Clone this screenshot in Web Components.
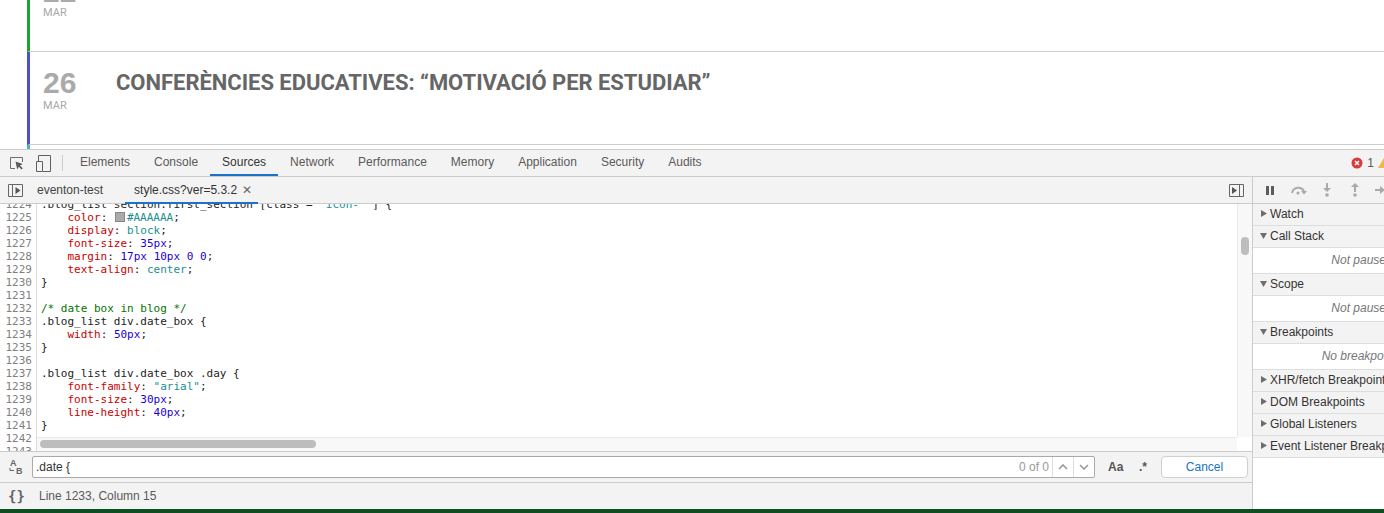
<!DOCTYPE html>
<html>
<head>
<meta charset="utf-8">
<title>DevTools</title>
<style>
html, body { margin: 0; padding: 0; height: 513px; overflow: hidden; background: #fff; }
body { display: flex; flex-direction: column; font-family: "Liberation Sans", Arial, sans-serif; }
</style>
</head>
<body>
<page-top></page-top>
<dev-tools></dev-tools>

<script>
class PageTop extends HTMLElement {
  constructor() {
    super();
    this.shadowDOM = this.attachShadow({ mode: "open" });
  }
  connectedCallback() {
    this.shadowDOM.innerHTML = `
      <style>
        :host { display: block; height: 149px; padding-left: 27px; overflow: hidden; background: #fff; box-sizing: border-box; }
        .row { display: flex; border-bottom: 1px solid #ccc; border-left: 3px solid #1fa12f; box-sizing: border-box; font-family: Roboto, sans-serif; }
        .first { height: 52px; align-items: flex-end; }
        .second { height: 93px; border-left-color: #5151bd; }
        .third { height: 4px; border-left-color: #49afcd; border-bottom: 0; }
        .date { width: 86px; padding-left: 13px; box-sizing: border-box; color: #aaa; flex: none; }
        .first .date { padding-bottom: 32px; }
        .first .day { margin-bottom: -2px; }
        .second .date { padding-top: 15px; }
        .day { font-family: "Liberation Sans", sans-serif; font-weight: bold; font-size: 30px; line-height: 31px; }
        .mon { font-size: 11px; line-height: 13px; margin-top: 1px; color: #a8a8a8; }
        h2 { margin: 18px 0 0; font-size: 22px; line-height: 26px; font-weight: 700; color: #666; letter-spacing: -0.03px; }
      </style>
      <div class="row first"><div class="date"><div class="day">22</div><div class="mon">MAR</div></div></div>
      <div class="row second">
        <div class="date"><div class="day">26</div><div class="mon">MAR</div></div>
        <h2>CONFERÈNCIES EDUCATIVES: “MOTIVACIÓ PER ESTUDIAR”</h2>
      </div>
      <div class="row third"></div>
    `;
  }
}
customElements.define("page-top", PageTop);

class DtTabs extends HTMLElement {
  constructor() {
    super();
    this.shadowDOM = this.attachShadow({ mode: "open" });
  }
  connectedCallback() {
    const items = ["Elements", "Console", "Sources", "Network", "Performance", "Memory", "Application", "Security", "Audits"];
    this.shadowDOM.innerHTML = `
      <style>
        :host { display: flex; align-items: stretch; height: 28px; box-sizing: border-box; background: #f3f3f3; border-top: 1px solid #ccc; border-bottom: 1px solid #ccc; font-size: 12px; color: #5a5a5a; overflow: hidden; position: relative; }
        .tools { display: flex; align-items: center; gap: 12px; padding-left: 10px; width: 62px; flex: none; box-sizing: border-box; }
        .sep { width: 1px; height: 16px; background: #ccc; flex: none; align-self: center; margin: 0 5px 0 0; }
        .tab { padding: 0 12px; line-height: 25px; flex: none; }
        .tab.on { color: #333; box-shadow: inset 0 -2px 0 #1a73c9; }
        .errs { position: absolute; right: 0; top: 0; height: 25px; display: flex; align-items: center; gap: 4px; }
        svg { display: block; flex: none; }
      </style>
      <div class="tools">
        <svg width="14" height="13" viewBox="0 0 14 13"><path d="M5 11.500H.5V.5h12V5" fill="none" stroke="#6e6e6e"/><path d="M5.500 4.500l1.700 8 1.600-2.700 2.700 2.700 1.200-1.200-2.700-2.700 2.700-1.600z" fill="#5a5a5a"/></svg>
        <svg width="15" height="17" viewBox="0 0 15 17"><path d="M2.500 6V.5h12v16H7" fill="none" stroke="#5f5f5f"/><path d="M.5 6.500h6v10h-6z" fill="none" stroke="#5f5f5f"/></svg>
      </div>
      <div class="sep"></div>
      ${items.map(t => `<div class="tab${t === "Sources" ? " on" : ""}">${t}</div>`).join("")}
      <div class="errs">
        <svg width="12" height="12" viewBox="0 0 12 12"><circle cx="6" cy="6" r="5.500" fill="#d93a3a"/><path d="M4 4l4 4M8 4l-4 4" stroke="#fff" stroke-width="1.500"/></svg>
        <span>1</span>
        <svg width="6" height="12" viewBox="0 0 6 12"><path d="M6 1L0 11h6z" fill="#f3b63f"/></svg>
      </div>
    `;
  }
}
customElements.define("dt-tabs", DtTabs);

class DtEditor extends HTMLElement {
  constructor() {
    super();
    this.shadowDOM = this.attachShadow({ mode: "open" });
  }
  connectedCallback() {
    const p = (n, v) => `    <i class="p">${n}</i>: ${v};`;
    const lines = [
      [1224, `.blog_list section.first_section [class = <i class="s">"icon-"</i> ] {`],
      [1225, `    <i class="p">color</i>: <b class="sw"></b><i class="s">#AAAAAA</i>;`],
      [1226, p("display", `<i class="s">block</i>`)],
      [1227, p("font-size", `<i class="n">35px</i>`)],
      [1228, p("margin", `<i class="n">17px</i> <i class="n">10px</i> <i class="n">0</i> <i class="n">0</i>`)],
      [1229, p("text-align", `<i class="s">center</i>`)],
      [1230, `}`],
      [1231, ``],
      [1232, `<i class="c">/* date box in blog */</i>`],
      [1233, `.blog_list div.date_box {`],
      [1234, p("width", `<i class="n">50px</i>`)],
      [1235, `}`],
      [1236, ``],
      [1237, `.blog_list div.date_box .day {`],
      [1238, p("font-family", `<i class="s">"arial"</i>`)],
      [1239, p("font-size", `<i class="n">30px</i>`)],
      [1240, p("line-height", `<i class="n">40px</i>`)],
      [1241, `}`],
      [1242, ``],
      [1243, ``]
    ];
    this.shadowDOM.innerHTML = `
      <style>
        :host { display: block; flex: 1; min-height: 0; background: #fff; position: relative; overflow: hidden; }
        .code { margin-top: -6px; font: 11px/13px "DejaVu Sans Mono", monospace; color: #222; }
        .ln { display: flex; height: 13px; white-space: pre; }
        .no { width: 32px; padding-right: 4px; text-align: right; color: #808080; border-right: 1px solid #ddd; flex: none; margin-right: 4px; }
        i { font-style: normal; }
        .p { color: #c80000; }
        .s { color: #1a8f8f; }
        .n { color: #1c00cf; }
        .c { color: #007400; }
        .sw { display: inline-block; width: 10px; height: 10px; background: #aaa; border: 1px solid #888; box-sizing: border-box; margin: 0 2px 0 1px; vertical-align: -1px; }
        .hbar { position: absolute; left: 37px; right: 15px; top: 233px; height: 14px; background: #f8f8f8; border-top: 1px solid #e8e8e8; box-sizing: border-box; }
        .hthumb { position: absolute; left: 3px; top: 2px; width: 276px; height: 8px; border-radius: 4px; background: #bdbdbd; }
        .vbar { position: absolute; right: 0; top: 0; width: 15px; height: 233px; background: #f8f8f8; border-left: 1px solid #e8e8e8; box-sizing: border-box; }
        .vthumb { position: absolute; left: 3px; top: 33px; width: 8px; height: 18px; border-radius: 4px; background: #bdbdbd; }
      </style>
      <div class="code">${lines.map(l => `<div class="ln"><span class="no">${l[0]}</span><span>${l[1]}</span></div>`).join("")}</div>
      <div class="hbar"><div class="hthumb"></div></div>
      <div class="vbar"><div class="vthumb"></div></div>
    `;
  }
}
customElements.define("dt-editor", DtEditor);

class DtSources extends HTMLElement {
  constructor() {
    super();
    this.shadowDOM = this.attachShadow({ mode: "open" });
  }
  connectedCallback() {
    this.shadowDOM.innerHTML = `
      <style>
        :host { display: flex; flex-direction: column; flex: 1; min-width: 0; font-size: 12px; color: #333; }
        .tabs { height: 27px; flex: none; display: flex; align-items: center; background: #f3f3f3; border-bottom: 1px solid #ccc; box-sizing: border-box; position: relative; }
        .tabs svg { display: block; flex: none; }
        .t { flex: none; }
        .open { position: absolute; left: 125px; bottom: -1px; width: 133px; height: 2px; background: #1a73c9; z-index: 1; display: block; }
        .x { color: #666; margin-left: 5px; font-size: 12px; }
        .search { height: 31px; flex: none; background: #f3f3f3; border-top: 1px solid #ccc; display: flex; align-items: center; box-sizing: border-box; }
        .case { width: 32px; flex: none; display: flex; justify-content: center; }
        .inp { width: 1063px; height: 22px; box-sizing: border-box; flex: none; background: #fff; border: 1px solid #aaa; border-radius: 2px; display: flex; align-items: center; padding-left: 3px; color: #333; font-size: 12px; }
        .q { flex: 1; }
        .cnt { color: #999; font-size: 12px; padding-right: 3px; }
        .arr { width: 20px; height: 20px; border-left: 1px solid #ddd; display: flex; align-items: center; justify-content: center; }
        .aa { margin-left: 13px; font-weight: bold; font-size: 12px; color: #555; width: 16px; }
        .re { margin-left: 15px; font-weight: bold; color: #555; font-size: 12px; width: 15px; }
        .cancel { margin-left: 7px; width: 87px; height: 22px; box-sizing: border-box; border: 1px solid #d0d0d0; border-radius: 4px; background: #fff; color: #1a73c9; display: flex; align-items: center; justify-content: center; }
        .status { height: 27px; flex: none; background: #f3f3f3; border-top: 1px solid #ccc; display: flex; align-items: center; box-sizing: border-box; color: #5a5a5a; }
        .curly { width: 39px; flex: none; text-align: center; padding-right: 6px; box-sizing: border-box; font: bold 14px "DejaVu Sans Mono", monospace; color: #666; }
      </style>
      <div class="tabs">
        <svg style="margin-left:8px" width="15" height="15" viewBox="0 0 15 15"><path d="M.5 1.500h14v12H.5zM4.500 1.500v12" fill="none" stroke="#666"/><path d="M7.500 4l5 3.500-5 3.500z" fill="#555"/></svg>
        <span class="t" style="margin-left:14px;color:#444">eventon-test</span>
        <span class="t" style="margin-left:31px">style.css?ver=5.3.2</span><span class="x">✕</span>
        <span class="open"></span>
        <svg style="position:absolute;right:8px;top:6px" width="15" height="15" viewBox="0 0 15 15"><path d="M.5 1.500h14v12H.5zM10.500 1.500v12" fill="none" stroke="#666"/><path d="M3 4l5 3.500-5 3.500z" fill="#555"/></svg>
      </div>
      <dt-editor></dt-editor>
      <div class="search">
        <div class="case"><svg width="18" height="18" viewBox="0 0 18 18"><text x="3" y="8" font-size="9" font-weight="bold" font-family="Liberation Sans" fill="#666">A</text><text x="9" y="16" font-size="9" font-weight="bold" font-family="Liberation Sans" fill="#666">B</text><path d="M3 10v2.500h4" fill="none" stroke="#666"/></svg></div>
        <div class="inp"><span class="q">.date {</span><span class="cnt">0 of 0</span>
          <span class="arr"><svg width="10" height="6" viewBox="0 0 10 6"><path d="M1 5l4-4 4 4" fill="none" stroke="#999" stroke-width="1.600"/></svg></span>
          <span class="arr"><svg width="10" height="6" viewBox="0 0 10 6"><path d="M1 1l4 4 4-4" fill="none" stroke="#999" stroke-width="1.600"/></svg></span>
        </div>
        <span class="aa">Aa</span><span class="re">.*</span>
        <div class="cancel">Cancel</div>
      </div>
      <div class="status"><span class="curly">{}</span><span>Line 1233, Column 15</span></div>
    `;
  }
}
customElements.define("dt-sources", DtSources);

class DtPane extends HTMLElement {
  constructor() {
    super();
    this.shadowDOM = this.attachShadow({ mode: "open" });
  }
  connectedCallback() {
    const title = this.getAttribute("title");
    const open = this.hasAttribute("open");
    const empty = this.getAttribute("empty");
    this.shadowDOM.innerHTML = `
      <style>
        /* the pane runs past the window edge, the text is centred in the full width */
        :host { display: block; width: 218px; font-size: 12px; color: #333; white-space: nowrap; }
        .h { height: 22px; background: #f3f3f3; border-bottom: 1px solid #ddd; box-sizing: border-box; display: flex; align-items: center; padding: 0 0 2px 7px; }
        .h svg { margin-right: 3px; flex: none; }
        .b { height: 26px; box-sizing: border-box; background: #fff; border-bottom: 1px solid #ddd; font-style: italic; color: #777; padding-top: 5px; text-align: center; }
      </style>
      <div class="h">
        <svg width="7" height="7" viewBox="0 0 7 7"><path d="${open ? "M0 1h7L3.5 7z" : "M1 0l6 3.5L1 7z"}" fill="#6e6e6e"/></svg>
        <span>${title}</span>
      </div>
      ${empty ? `<div class="b">${empty}</div>` : ""}
    `;
  }
}
customElements.define("dt-pane", DtPane);

class DtDebugger extends HTMLElement {
  constructor() {
    super();
    this.shadowDOM = this.attachShadow({ mode: "open" });
  }
  connectedCallback() {
    this.shadowDOM.innerHTML = `
      <style>
        :host { display: block; width: 132px; box-sizing: border-box; flex: none; border-left: 1px solid #ccc; overflow: hidden; background: #fff; }
        .bar { height: 27px; background: #f3f3f3; border-bottom: 1px solid #ccc; box-sizing: border-box; display: flex; align-items: center; gap: 15px; padding-left: 12px; }
        svg { display: block; flex: none; }
      </style>
      <div class="bar">
        <svg width="10" height="9" viewBox="0 0 10 9"><path d="M1 0h3v9H1zM6 0h3v9H6z" fill="#5c5c5c"/></svg>
        <svg width="18" height="10" viewBox="0 0 18 10"><path d="M2 8a6.500 6.500 0 0 1 12-2" fill="none" stroke="#aaa" stroke-width="2"/><path d="M11 6h6l-3 3.500z" fill="#aaa"/><circle cx="8" cy="8" r="1.600" fill="#aaa"/></svg>
        <svg width="8" height="14" viewBox="0 0 8 14"><path d="M3 0h2v5h3L4 9 0 5h3z" fill="#aaa"/><circle cx="4" cy="12" r="1.800" fill="#aaa"/></svg>
        <svg width="8" height="14" viewBox="0 0 8 14" style="margin-left:5px"><path d="M3 9h2V4h3L4 0 0 4h3z" fill="#aaa"/><circle cx="4" cy="12" r="1.800" fill="#aaa"/></svg>
        <svg width="14" height="8" viewBox="0 0 14 8" style="margin-left:1px"><path d="M0 3h5V0l5 4-5 4V5H0z" fill="#aaa"/><circle cx="12" cy="4" r="1.800" fill="#aaa"/></svg>
      </div>
      <dt-pane title="Watch"></dt-pane>
      <dt-pane title="Call Stack" open empty="Not paused"></dt-pane>
      <dt-pane title="Scope" open empty="Not paused"></dt-pane>
      <dt-pane title="Breakpoints" open empty="No breakpoints"></dt-pane>
      <dt-pane title="XHR/fetch Breakpoints"></dt-pane>
      <dt-pane title="DOM Breakpoints"></dt-pane>
      <dt-pane title="Global Listeners"></dt-pane>
      <dt-pane title="Event Listener Breakpoints"></dt-pane>
    `;
  }
}
customElements.define("dt-debugger", DtDebugger);

class DevTools extends HTMLElement {
  constructor() {
    super();
    this.shadowDOM = this.attachShadow({ mode: "open" });
  }
  connectedCallback() {
    this.shadowDOM.innerHTML = `
      <style>
        :host { display: flex; flex-direction: column; height: 364px; border-bottom: 4px solid #0b4f23; box-sizing: border-box; background: #fff; }
        .main { display: flex; flex: 1; min-height: 0; }
      </style>
      <dt-tabs></dt-tabs>
      <div class="main">
        <dt-sources></dt-sources>
        <dt-debugger></dt-debugger>
      </div>
    `;
  }
}
customElements.define("dev-tools", DevTools);
</script>
</body>
</html>
